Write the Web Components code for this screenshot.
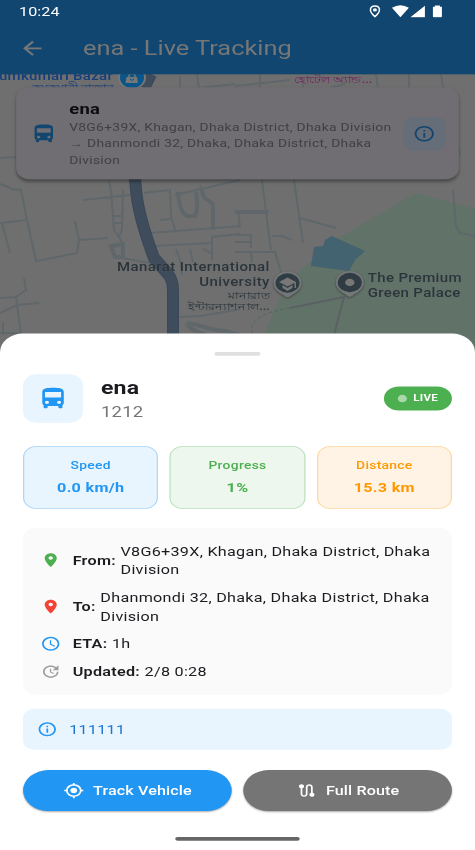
<!DOCTYPE html>
<html lang="en">
<head>
<meta charset="utf-8">
<title>ena - Live Tracking</title>
<style>
html,body{margin:0;padding:0;width:475px;height:850px;overflow:hidden;background:#fff}
</style>
</head>
<body>
<tracking-screen></tracking-screen>
<script>
const PATHS = {
  bus: '<path d="M4 16c0 .88.39 1.67 1 2.22V20c0 .55.45 1 1 1h1c.55 0 1-.45 1-1v-1h8v1c0 .55.45 1 1 1h1c.55 0 1-.45 1-1v-1.78c.61-.55 1-1.34 1-2.22V6c0-3.5-3.58-4-8-4s-8 .5-8 4v10zm3.5 1c-.83 0-1.5-.67-1.5-1.5S6.67 14 7.5 14s1.5.67 1.5 1.5S8.33 17 7.5 17zm9 0c-.83 0-1.5-.67-1.5-1.5s.67-1.5 1.5-1.5 1.5.67 1.5 1.5-.67 1.5-1.5 1.5zm1.5-6H6V6h12v5z"/>',
  info: '<path d="M11 7h2v2h-2zm0 4h2v6h-2zm1-9C6.48 2 2 6.48 2 12s4.48 10 10 10 10-4.48 10-10S17.52 2 12 2zm0 18c-4.41 0-8-3.59-8-8s3.59-8 8-8 8 3.59 8 8-3.59 8-8 8z"/>',
  back: '<path d="M20 11H7.83l5.59-5.59L12 4l-8 8 8 8 1.41-1.41L7.83 13H20v-2z"/>',
  pin: '<path d="M12 2C8.13 2 5 5.13 5 9c0 5.25 7 13 7 13s7-7.75 7-13c0-3.87-3.13-7-7-7zm0 9.5c-1.38 0-2.5-1.12-2.5-2.5s1.12-2.5 2.5-2.5 2.5 1.12 2.5 2.5-1.12 2.5-2.5 2.5z"/>',
  clock: '<path d="M11.99 2C6.47 2 2 6.48 2 12s4.47 10 9.99 10C17.52 22 22 17.52 22 12S17.52 2 11.99 2zM12 20c-4.42 0-8-3.58-8-8s3.58-8 8-8 8 3.58 8 8-3.58 8-8 8zm.5-13H11v6l5.25 3.15.75-1.23-4.5-2.67z"/>',
  update: '<path d="M21 10.12h-6.78l2.74-2.82c-2.73-2.7-7.15-2.8-9.88-.1-2.73 2.71-2.73 7.08 0 9.79s7.15 2.71 9.88 0C18.32 15.65 19 14.08 19 12.1h2c0 1.98-.88 4.55-2.64 6.29-3.51 3.48-9.21 3.48-12.72 0-3.5-3.47-3.53-9.11-.02-12.58s9.14-3.47 12.65 0L21 3v7.12zM12.5 8v4.25l3.5 2.08-.72 1.21L11 13V8h1.5z"/>',
  target: '<path d="M12 8c-2.21 0-4 1.79-4 4s1.79 4 4 4 4-1.79 4-4-1.79-4-4-4zm8.94 3A8.994 8.994 0 0 0 13 3.06V1h-2v2.06A8.994 8.994 0 0 0 3.06 11H1v2h2.06A8.994 8.994 0 0 0 11 20.94V23h2v-2.06A8.994 8.994 0 0 0 20.94 13H23v-2h-2.06zM12 19c-3.87 0-7-3.13-7-7s3.13-7 7-7 7 3.13 7 7-3.13 7-7 7z"/>',
  route: '<path d="M19 15.18V7c0-2.21-1.79-4-4-4s-4 1.79-4 4v10c0 1.1-.9 2-2 2s-2-.9-2-2V8.82C8.16 8.4 9 7.3 9 6c0-1.66-1.34-3-3-3S3 4.34 3 6c0 1.3.84 2.4 2 2.82V17c0 2.21 1.79 4 4 4s4-1.79 4-4V7c0-1.1.9-2 2-2s2 .9 2 2v8.18A2.996 2.996 0 0 0 18 21c1.66 0 3-1.34 3-3 0-1.3-.84-2.4-2-2.82z"/>'
};
function define(name, html) {
  const t = document.createElement('template');
  customElements.define(name, class extends HTMLElement {
    constructor() {
      super();
      t.innerHTML = typeof html === 'function' ? html(this) : html;
      this.attachShadow({mode: 'open'}).append(t.content.cloneNode(true));
    }
  });
}

define('md-icon', el => `<style>:host{display:block;flex:none;width:var(--s,24px);height:var(--s,24px)}svg{display:block;width:100%;height:100%;fill:currentColor}</style>
<svg viewBox="0 0 24 24">${PATHS[el.getAttribute('name')]}</svg>`);

define('map-view', `<style>
:host{position:absolute;left:0;top:0;width:412px;height:400px;display:block;overflow:hidden;background:#6f6f6f;color:#2a353b}
svg{position:absolute;left:0;top:0;width:412px;height:915px}
.l{position:absolute;white-space:nowrap;font:500 13px/16px Roboto,"Noto Sans",sans-serif;letter-spacing:.25px;text-shadow:0 0 2px #7776}
.r{text-align:right}
.b{font-size:11px;line-height:12px;letter-spacing:0}
</style>
<svg viewBox="0 0 475 850" preserveAspectRatio="none">
 <path fill="#617268" d="M475 209 416 193 342 236 298 272 281 295 264 335V350H475Z"/>
 <path fill="#42636f" d="M314 247 323 246 325 240 332 236 365 251 355 260 349 271 311 266Z"/>
 <g fill="none" stroke="#5f676b" stroke-width="2">
  <path d="M0 158 16 157M0 184 6 186 12 189 21 190 27 220 36 261 42 260 77 253 79 240 75 221M0 223 27 220M2 223 10 253M79 240 108 238M24 278 26 290 16 297 0 298M0 313 17 305 39 303M16 297 21 335M83 200 130 195M144 193 170 190 171 217 176 232M160 220 170 219M151 233 240 226M154 246 212 243 212 260M212 243V237L240 234M176 249 180 260 182 275M190 249 193 262M202 248 212 254M109 180 111 191 114 230 119 237 122 243M123 190 122 230 119 236M114 216H122M114 223H122M122 258 150 263M0 333H22M3 322V335M178 317 200 316 225 312 240 309"/>
  <path d="M235 211H269M235 235H251V248M235 242H252M235 252H275L281 272M251 252 252 263M272 236 282 236 292 240M300 218 336 228M238 210 240 228M453 190 456 227 460 233 475 236M175 195 240 180M200 185 205 198 212 202M235 86 290 80M260 72V90M303 83V88M376 74 378 90M409 74V90M441 74 443 88 460 155M345 84 330 88M180 76V88M235 84 180 90M197 74 199 90M262 180 266 212 271 250M294 180 303 243"/>
 </g>
 <path fill="none" stroke="#5f676b" stroke-width="4" d="M178 192C179 208 183 214 187 216H195C198 209 198 202 196 192M202 190C203 202 211 199 213 205V230M235 212H268M111 246 123 244V257H115ZM187 323C190 332 203 333 206 335M187 323C200 324 210 331 226 331L240 335"/>
 <path fill="none" stroke="#5b6064" stroke-width="2" d="M290 308 344 297 334 335"/>
 <path fill="none" stroke="#52665d" stroke-width=".8" stroke-dasharray="4 2" d="M290 308C265 312 249 319 252 334"/>
 <path fill="none" stroke="#38475a" stroke-width="12" d="M151 74 144 88M135 178 136 190C138 212 148 242 154 258L168 274Q173 280 173 290V340"/>
 <path fill="none" stroke="#3f4c5b" stroke-width="10" d="M151 74 144 88M135 178 136 190C138 212 148 242 154 258L168 274Q173 280 173 290V340"/>
 <ellipse cx="132" cy="77.500" rx="14" ry="12" fill="#777"/><ellipse cx="132" cy="77.500" rx="12" ry="10.500" fill="#08568a"/>
 <path d="M126.500 77h10.500l1 6h-12.500z" fill="#777"/><path d="M129 77v-2q3-3 6 0v2" fill="none" stroke="#777" stroke-width="1.500"/><path d="M130 79q2 3 4 0" fill="none" stroke="#08568a"/>
 <g id="p"><path fill="#737778" d="M287.500 271.500c-8 0-14 5-14 11.500 0 7 7 10 11 13q3 2.500 6 0c4-3 11-6 11-13 0-6.500-6-11.500-14-11.500Z" style="filter:drop-shadow(0 1px 1px #444)"/><ellipse cx="287.500" cy="283" rx="12" ry="9.700" fill="#2f3c43"/></g>
 <use href="#p" x="62.300" y="-.5"/>
 <path fill="#777" d="M287.500 277.500 279 282 287.500 286.500 294.500 283V288H296V282ZM282.500 285V288L287.500 291 292.500 288V285L287.500 288Z"/>
 <ellipse cx="349.800" cy="282.500" rx="4.700" ry="3.700" fill="#777"/>
</svg>
<div class="l" style="right:314px;top:74px;color:#143e7c">Kumkumari Bazar</div>
<div class="l b" style="right:313.500px;top:89px;color:#143e7c">কুমকুমারী বাজার</div>
<div class="l b" style="left:255px;top:80px;color:#721f60">হোটেল অ্যান্ড...</div>
<div class="l r" style="right:178px;top:280px;letter-spacing:.35px">Manarat International<br>University</div>
<div class="l b r" style="right:178px;top:312.500px">মানারাত<br>ইন্টারন্যাশনাল...</div>
<div class="l" style="left:319px;top:292px;letter-spacing:.3px">The Premium<br>Green Palace</div>`);

define('status-bar', `<style>:host{display:flex;height:24px;box-sizing:border-box;align-items:center;color:#fff;padding:0 26px 0 16.500px;font:400 14px/24px Roboto,sans-serif}
span{flex:1;letter-spacing:.05px}svg{width:65.900px;height:14px;fill:#fff;display:block}</style>
<span>10:24</span>
<svg viewBox="0 0 76 13" preserveAspectRatio="none"><path fill="none" stroke="#fff" stroke-width="1.500" d="M6 1.300C3 1.300 1.500 3.200 1.500 5.300 1.500 8 6 12 6 12S10.500 8 10.500 5.300C10.500 3.200 9 1.300 6 1.300Z"/><ellipse cx="6" cy="5.300" rx="2" ry="1.600"/><path d="M23 3Q31.500-2 40 3L31.500 12.500ZM41.500 12.500 56 1V12.500ZM64 2h2V.8h5V2h2V11.500Q73 12.500 72 12.500H65Q64 12.500 64 11.500Z"/></svg>`);

define('app-bar', `<style>:host{display:block;position:relative;background:#10466f;height:80px}
.t{display:flex;height:56px;align-items:center;padding-left:16px;gap:32px;color:#777;font:400 22px/28px Roboto,sans-serif}</style>
<slot></slot><div class="t"><md-icon name="back"></md-icon><span>ena - Live Tracking</span></div>`);

define('route-card', `<style>:host{display:flex;position:relative;margin:14px 14px 0;box-sizing:border-box;height:99px;padding:12px;border-radius:12px;background:#706e73;box-shadow:0 2px 3px #0005;align-items:center;color:#12466f;font-family:Roboto,"Noto Sans",sans-serif}
.x{flex:1;min-width:0;margin:0 0 0 10px;letter-spacing:.26px}
h3{margin:0;font-size:16px;line-height:23px;color:#0c0c0e;padding-top:1px}
p{margin:0;font-size:12px;line-height:17.200px;color:#3f3f40;white-space:nowrap}
p span{display:block}p .z{padding-top:1.300px}
.i{flex:none;padding:8px;border-radius:8px;background:#656d78}</style>
<md-icon name="bus"></md-icon><div class="x"><h3>ena</h3><p><span>V8G6+39X, Khagan, Dhaka District, Dhaka Division</span><span>→ Dhanmondi 32, Dhaka, Dhaka District, Dhaka</span><span class="z">Division</span></p></div>
<div class="i"><md-icon name="info" style="--s:20px"></md-icon></div>`);

define('vehicle-header', `<style>:host{display:flex;align-items:center;height:52px;margin-top:20px}
.b{padding:12px;border-radius:12px;background:#e8f4fe;color:#2196f3}
.n{flex:1;margin-left:15.500px;padding-top:1px}h2{margin:0;font-size:20px;line-height:28.600px;color:#1d1b20}p{margin:0;padding-top:.6px;font-size:16px;line-height:23px;color:#757575}
.l{display:flex;align-items:center;gap:6px;padding:6px 12px;height:14px;border-radius:20px;background:#4caf50;color:#fff;font-weight:700;font-size:10px;line-height:14px}
.l span{padding-top:1px}
i{width:8px;height:8px;border-radius:50%;background:#a9d9ab}</style>
<div class="b"><md-icon name="bus" style="--s:28px"></md-icon></div><div class="n"><h2>ena</h2><p>1212</p></div><div class="l"><i></i><span>LIVE</span></div>`);

define('stat-tile', `<style>:host{display:block;flex:1;box-sizing:border-box;height:68.200px;padding-top:12.500px;border:1px solid var(--b);border-radius:12px;background:var(--g);color:var(--c);text-align:center}
.a{font-size:12px;line-height:17.200px;font-weight:500}.v{font-size:14px;line-height:20px;font-weight:700;margin-top:4.500px}</style>
<div class="a"><slot name="label"></slot></div><div class="v"><slot></slot></div>`);

define('info-row', el => `<style>:host{display:flex;align-items:center;font-size:14px;line-height:20px;color:#1d1b20}
md-icon{--s:18px;margin-right:10px;color:${el.getAttribute('tint')}}b{font-weight:600;margin-right:4px}</style>
<md-icon name="${el.getAttribute('icon')}"></md-icon><b><slot name="label"></slot></b><span><slot></slot></span>`);

define('pill-button', el => `<style>:host{display:flex;flex:1;height:44px;border-radius:22px;align-items:center;justify-content:center;gap:8px;color:#fff;font-size:14px;font-weight:500;letter-spacing:.1px;background:var(--g);box-shadow:0 1px 2px #0005}
md-icon{--s:18px}</style><md-icon name="${el.getAttribute('icon')}"></md-icon><span><slot></slot></span>`);

define('detail-sheet', `<style>:host{position:absolute;left:0;top:358.500px;width:412px;height:556.500px;box-sizing:border-box;padding:20px 20px 0;border-radius:20px 20px 0 0;background:#fff;font-family:Roboto,sans-serif;letter-spacing:.25px;display:flex;flex-direction:column}
.h{width:40px;height:4px;border-radius:2px;background:#e0e0e0;align-self:center}
.s{display:flex;gap:10px;margin:25.200px 0 20px}
.d{display:flex;flex-direction:column;gap:10px;padding:15px;border-radius:12px;background:#fafafa}
.n{display:flex;align-items:center;gap:10px;padding:12px;margin-top:15px;border-radius:10px;background:#e8f4fe;color:#1976d2;font-size:14px;line-height:20px}
.n md-icon{--s:18px;color:#2196f3}
.k{display:flex;gap:10px;margin-top:22px}
.g{width:108px;height:4px;border-radius:2px;background:#666;align-self:center;margin-top:28px}</style>
<div class="h"></div><vehicle-header></vehicle-header>
<div class="s"><stat-tile style="--c:#2196f3;--b:#a6d5fa;--g:#e8f4fe"><span slot="label">Speed</span>0.0 km/h</stat-tile><stat-tile style="--c:#4caf50;--b:#b7dfb9;--g:#edf7ee"><span slot="label">Progress</span>1%</stat-tile><stat-tile style="--c:#ff9800;--b:#ffd699;--g:#fff3e5"><span slot="label">Distance</span>15.3 km</stat-tile></div>
<div class="d"><info-row icon="pin" tint="#4caf50"><span slot="label">From:</span>V8G6+39X, Khagan, Dhaka District, Dhaka Division</info-row><info-row icon="pin" tint="#f44336"><span slot="label">To:</span>Dhanmondi 32, Dhaka, Dhaka District, Dhaka Division</info-row><info-row icon="clock" tint="#2196f3"><span slot="label">ETA:</span>1h</info-row><info-row icon="update" tint="#9e9e9e"><span slot="label">Updated:</span>2/8 0:28</info-row></div>
<div class="n"><md-icon name="info"></md-icon><span>111111</span></div>
<div class="k"><pill-button icon="target" style="--g:#2196f3">Track Vehicle</pill-button><pill-button icon="route" style="--g:#757575">Full Route</pill-button></div>
<div class="g"></div>`);

define('tracking-screen', `<style>:host{display:block;width:475px;height:850px;overflow:hidden;contain:strict;background:#fff}
.stage{position:relative;width:412px;height:915px;overflow:hidden;transform:scale(1.15291,.92896);transform-origin:0 0}</style>
<div class="stage"><map-view></map-view><app-bar><status-bar></status-bar></app-bar><route-card></route-card><detail-sheet></detail-sheet></div>`);
</script>
</body>
</html>
